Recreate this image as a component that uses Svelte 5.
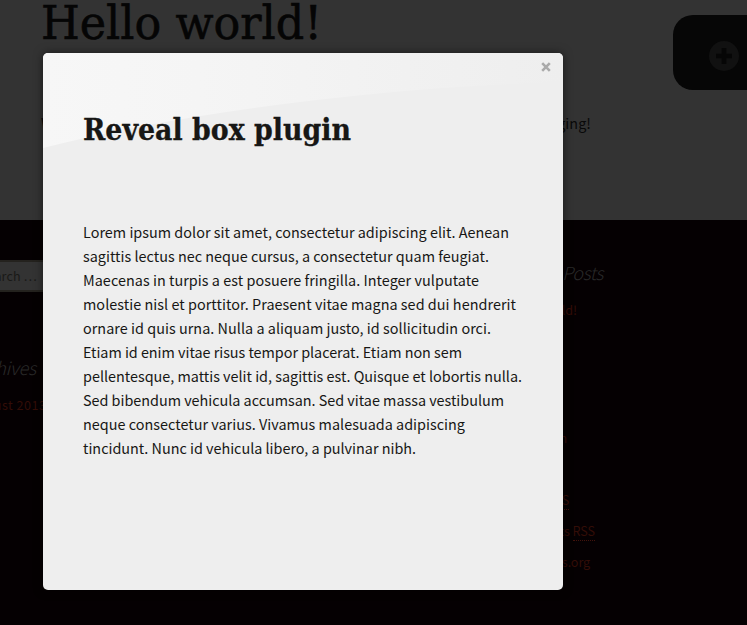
<script>
  const lines = [
    ['Lorem ipsum dolor sit amet, consectetur adipiscing elit. Aenean', 426],
    ['sagittis lectus nec neque cursus, a consectetur quam feugiat.', 406],
    ['Maecenas in turpis a est posuere fringilla. Integer vulputate', 396],
    ['molestie nisl et porttitor. Praesent vitae magna sed dui hendrerit', 433],
    ['ornare id quis urna. Nulla a aliquam justo, id sollicitudin orci.', 408],
    ['Etiam id enim vitae risus tempor placerat. Etiam non sem', 379],
    ['pellentesque, mattis velit id, sagittis est. Quisque et lobortis nulla.', 439],
    ['Sed bibendum vehicula accumsan. Sed vitae massa vestibulum', 421],
    ['neque consectetur varius. Vivamus malesuada adipiscing', 382],
    ['tincidunt. Nunc id vehicula libero, a pulvinar nibh.', 333]
  ];

  // Spreads a line over the given width by adjusting its tracking.
  function fit(node, width) {
    const natural = node.getBoundingClientRect().width;
    node.style.letterSpacing = (width - natural) / node.textContent.length + 'px';
  }
  // Condenses a heading horizontally to the given width.
  function condense(node, width) {
    node.style.transform = `scaleX(${width / node.getBoundingClientRect().width})`;
  }
</script>

<div class="page">
  <main>
    <h1><span use:condense={281}>Hello world!</span></h1>
    <p class="intro"><span use:fit={550}>Welcome to WordPress. This is your first post. Edit or delete it, then start blogging!</span></p>
    <div class="tab">
      <svg width="30" height="30" viewBox="0 0 30 30"><circle cx="15" cy="15" r="15" fill="#111" /><path d="M15 7v16M7 15h16" stroke="#060606" stroke-width="4.6" /></svg>
    </div>
  </main>
  <footer>
    <section class="left">
      <div class="search"><span use:fit={57}>Search …</span></div>
      <h3><span use:fit={66}>Archives</span></h3>
      <a href="#archive"><span use:fit={76.5}>August 2013</span></a>
    </section>
    <section class="right">
      <h3><span use:fit={97}>Recent Posts</span></h3>
      <a href="#post"><span use:fit={71}>Hello world!</span></a>
      <h3 class="meta">Meta</h3>
      <a href="#admin"><span use:fit={61}>Site Admin</span></a>
      <a href="#logout">Log out</a>
      <a href="#entries"><span use:fit={63}>Entries <abbr>RSS</abbr></span></a>
      <a href="#comments"><span use:fit={89}>Comments <abbr>RSS</abbr></span></a>
      <a href="#wp"><span use:fit={84}>WordPress.org</span></a>
    </section>
  </footer>

  <div class="modal">
    <svg class="shine" width="520" height="96" viewBox="0 0 520 96">
      <defs><linearGradient id="shine"><stop offset="0" stop-color="#f7f7f7" /><stop offset=".3" stop-color="#f5f5f5" /><stop offset="1" stop-color="#eee" /></linearGradient></defs>
      <path d="M0 0H520V29Q400 33 310 43Q130 62 0 95Z" fill="url(#shine)" />
    </svg>
    <button aria-label="Close"><svg width="10" height="10" viewBox="0 0 10 10"><path d="M1.2 1.2L8.8 8.8M8.8 1.2L1.2 8.8" stroke="#aaa" stroke-width="2.6" /></svg></button>
    <h2><span use:condense={268}>Reveal box plugin</span></h2>
    <div class="copy">
      {#each lines as [text, width]}
        <div><span use:fit={width}>{text}</span></div>
      {/each}
    </div>
  </div>
</div>

<style>
  .page { position: relative; width: 747px; height: 625px; overflow: hidden; background: #050002; font: 14.4px/24px "Noto Sans CJK JP", sans-serif; }
  span { display: inline-block; white-space: nowrap; transform-origin: 0 50%; }
  h1, h2, h3, p { margin: 0; }
  main { position: relative; box-sizing: border-box; height: 220px; padding-left: 41px; background: #333; color: #090909; }
  h1 { height: 111px; font: 46px/47px "DejaVu Serif", serif; color: #050505; -webkit-text-stroke: .6px #050505; }
  .intro { white-space: nowrap; }
  .tab { position: absolute; left: 673px; top: 15px; box-sizing: border-box; width: 100px; height: 75px; padding: 26px 0 0 36px; border-radius: 20px; background: #060606; }
  .tab svg { display: block; }
  footer { display: flex; height: 405px; font-size: 12.6px; }
  .left { flex: none; box-sizing: border-box; width: 540px; margin-left: -34px; padding: 40px 0 0 4px; }
  .right { flex: none; width: 200px; padding-top: 39px; }
  .search { box-sizing: border-box; width: 260px; height: 32px; margin-bottom: 62px; padding-left: 8px; border: 2px solid #24221e; background: #333; color: #191917; line-height: 28px; }
  h3 { height: 26px; margin-bottom: 9px; font: italic 300 18px/26px "Noto Sans CJK JP", sans-serif; color: #292929; }
  .left h3 { margin-bottom: 9px; }
  a { display: block; height: 31px; line-height: 31px; color: #330d07; text-decoration: none; }
  .right .meta { margin-top: 62px; margin-bottom: 9px; }
  abbr { display: inline-block; line-height: 18px; border-bottom: 1px dotted #43130c; }
  .modal { position: absolute; left: 43px; top: 53px; box-sizing: border-box; width: 520px; height: 537px; padding: 60px 40px 0; border-radius: 5px; background: #eee; box-shadow: 0 0 10px rgba(0, 0, 0, .5); color: #171715; overflow: hidden; }
  .shine { position: absolute; left: 0; top: 0; }
  button { position: absolute; left: 498px; top: 9px; padding: 0; border: 0; background: none; }
  button svg { display: block; }
  h2 { position: relative; height: 107px; font: bold 29px/34px "DejaVu Serif", serif; -webkit-text-stroke: .3px #171715; }
  .copy div { height: 24px; }
</style>
